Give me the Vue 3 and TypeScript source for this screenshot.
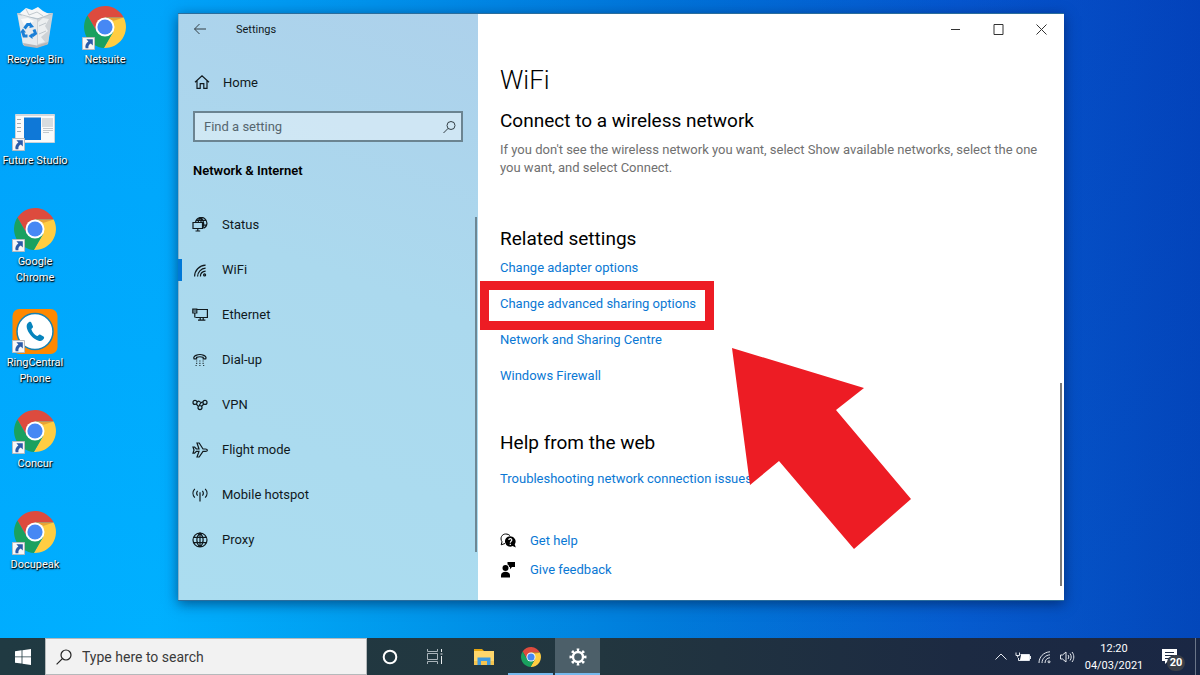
<script setup lang="ts">
interface Shortcut {
  label: string
  kind: 'bin' | 'chrome' | 'studio' | 'phone'
}
interface NavItem {
  label: string
  d: string
  active?: boolean
}

const columns: Shortcut[][] = [
  [
    { label: 'Recycle Bin', kind: 'bin' },
    { label: 'Future Studio', kind: 'studio' },
    { label: 'Google Chrome', kind: 'chrome' },
    { label: 'RingCentral Phone', kind: 'phone' },
    { label: 'Concur', kind: 'chrome' },
    { label: 'Docupeak', kind: 'chrome' },
  ],
  [{ label: 'Netsuite', kind: 'chrome' }],
]

const nav: NavItem[] = [
  {
    label: 'Status',
    d: 'M3.6 5A5.700 5.700 0 1 1 11.500 11.300M9 .6C6.800 2 6.200 3.600 6.200 5M9 .6C11.800 3 12.200 7.500 11 10.500M9 .6V5M4.200 3.300H13.800M11.500 8.200H14.400M1 5.500H10.500V11.500H1ZM5.800 11.500V14M3.500 14H8.200',
  },
  {
    label: 'WiFi',
    d: 'M2.6 14.5C2.6 8.5 7 3.6 13.6 3.2M5.6 14.5C5.6 10 9 6.6 13.6 6.2M8.4 14.5C8.4 11.6 10.4 9.4 13.6 9.1M11.6 12.9a1 1 0 1 0 2 0a1 1 0 1 0 -2 0',
    active: true,
  },
  {
    label: 'Ethernet',
    d: 'M5 2.5H15.4V10.5H3.5M8.2 10.5V13M11.2 10.5V13M6 13.1H13.4M.8 2.2H4.8V6H.8ZM2.8 6V10.5M1.6 4H4',
  },
  {
    label: 'Dial-up',
    d: 'M2 6.8C1.2 5.4 2.4 4.2 4 3.4C6.4 2.3 9.4 2.3 11.8 3.4C13.4 4.2 14.6 5.4 13.8 6.8H11.2V5.4C9.2 4.6 6.6 4.6 4.6 5.4V6.8ZM4.2 9h1M7.4 9h1M10.6 9h1M4.2 11.3h1M7.4 11.3h1M10.6 11.3h1M3.6 13.5h1M7.4 13.5h1M11.2 13.5h1',
  },
  {
    label: 'VPN',
    d: 'M1 5.4a2 2 0 1 0 4 0a2 2 0 1 0 -4 0M11 5.4a2 2 0 1 0 4 0a2 2 0 1 0 -4 0M6 10.6a2 2 0 1 0 4 0a2 2 0 1 0 -4 0M5 5.4C6.6 3.4 8 4.2 8.4 5.6M4.2 7L6.4 9.4M11 5.4C9.6 4.6 7.6 7 7.2 8.8M11.8 7L9.6 9.4',
  },
  {
    label: 'Flight mode',
    d: 'M1 5H2.6L4.4 7H7L5 1H7.2L11 7H13.4C16 7 16 9.4 13.4 9.4H11L7.2 15H5L7 9.4H4.4L2.6 11.2H1L2 8Z',
  },
  {
    label: 'Mobile hotspot',
    d: 'M8 6.4V14.4M7.4 5.8h1.2M5.6 3.8C4.5 5.2 4.5 7.2 5.6 8.6M10.4 3.8C11.5 5.2 11.5 7.2 10.4 8.6M2.8 1.8C.4 4.4 .4 8 2.8 10.6M13.2 1.8C15.6 4.4 15.6 8 13.2 10.6',
  },
  {
    label: 'Proxy',
    d: 'M1 8a7 7 0 1 0 14 0a7 7 0 1 0 -14 0M8 1C3.8 5 3.8 11 8 15M8 1C12.2 5 12.2 11 8 15M8 1V15M2 5.4H14M2 10.6H14',
  },
]
</script>

<template>
  <div class="screen">
    <svg class="defs" aria-hidden="true">
      <symbol id="chrome" viewBox="-21 -21 42 42">
        <path fill="#dd4b3e" d="M-17.6-11.45A21 21 0 0 1 18.7-9.5L0-9.5L0 0L-8.23 4.75Z" />
        <path fill="#ffcd42" d="M18.7-9.5A21 21 0 0 1-1.12 20.95L8.23 4.75L0 0L0-9.5Z" />
        <path fill="#1aa15f" d="M-1.12 20.95A21 21 0 0 1-17.6-11.45L-8.23 4.75L0 0L8.23 4.75Z" />
        <path fill="#a52714" opacity=".25" d="M0-9.5H18.7L8-6Z" />
        <circle r="9.5" fill="#fff" />
        <circle r="7.6" fill="#4688f4" />
      </symbol>
      <symbol id="shortcut" viewBox="0 0 13 13">
        <path fill="#f7f7f7" stroke="#b8bcc0" d="M.5.5h12v12h-12z" />
        <path fill="#2b5ba8" d="M4.4 2.2H10.8V8.4L8.8 6.6C7 7.6 6.2 9 6.4 11.2H3.6C2.8 8.4 4 6 6.4 4.4Z" />
      </symbol>
    </svg>

    <div class="desktop">
      <nav class="icons" aria-label="Desktop">
        <div v-for="(column, c) in columns" :key="c" class="column">
          <button v-for="item in column" :key="item.label" class="shortcut" type="button">
            <span class="art">
              <svg v-if="item.kind === 'chrome'" viewBox="0 0 46 46"><use href="#chrome" x="2" y="0" width="42" height="42" /></svg>
              <svg v-else-if="item.kind === 'bin'" viewBox="0 0 46 46">
                <path fill="#c9d6df" d="M5 7L41 7L36 38L25 41L11 39Z" />
                <path fill="#f5f6f7" d="M8 7L14 2L20 4L26 1L31 5L37 8L30 13L20 11L12 12Z" />
                <path fill="#e6eaed" d="M6 9L25 13L25 41L11 38Z" />
                <path fill="#cdd2d6" d="M25 13L40 8L36 37L25 41Z" />
                <path fill="#eceff0" d="M26 16L31 12L37 13L33 20L36 25L29 31L33 36L26 38Z" />
                <path fill="#fafbfb" d="M9 13L16 12L22 15L18 18L12 19Z" />
                <path fill="none" stroke="#abb4bb" stroke-width=".7" d="M5 7.500L25 13L41 7.500M14 3L17 9L25 6L31 10M27 20L34 17M27 28L34 25" />
                <path fill="#b9b6b6" d="M11 37L25 39.500L36 36L35.500 38.500L25 42L12 40Z" />
                <g fill="none" stroke="#1a7fd6" stroke-width="3">
                  <path d="M12.500 22.500L15.500 18.500H18.500" />
                  <path d="M22 23.500L23.500 27.500L20 30" />
                  <path d="M10.500 25.500L12 30H15.500" />
                </g>
                <path fill="#1a7fd6" d="M18 16L22 21L17.500 22ZM20.500 27L20.500 33L16.500 30ZM8 26.500L11 22.500L14 26.500Z" />
              </svg>
              <svg v-else-if="item.kind === 'studio'" viewBox="0 0 46 46">
                <path fill="#fafafa" stroke="#c9d3da" d="M3.500 7.500H42.500V35.500H3.500Z" />
                <path fill="#d3d8dc" d="M4 7H42V9H4Z" />
                <path fill="#0f78d7" d="M12 10.500H29V33H12Z" />
                <path fill="#d8dcdf" d="M30 11H41V20H30Z" />
                <path stroke="#c3c8cc" d="M31 21.500H41M31 23.500H41M31 25.500H37" />
                <path stroke="#a5abb0" d="M5 12.500H9M5 16.500H9M5 20.500H9M5 24.500H9" />
              </svg>
              <svg v-else viewBox="0 0 46 46">
                <rect x=".5" width="45" height="45" rx="7" fill="#ff8800" />
                <circle cx="23" cy="22.500" r="18" fill="#fff" stroke="#1681b3" stroke-width="1.500" />
                <path fill="#0684bd" d="M15.500 14.500C17 12.600 19 12.200 19.500 14L21 17.500C21.400 19 19 19.500 19.400 20.500C20.600 23.600 22.600 25.800 25 27C26.200 27.600 26.600 25.200 28 25.600L31.500 27.600C33 28.800 31.600 30.600 30 31.600C27.600 33 22 30.500 18.500 26C15 21.500 13.600 17 15.500 14.500Z" />
              </svg>
              <svg v-if="item.kind !== 'bin'" class="overlay"><use href="#shortcut" /></svg>
            </span>
            <span class="caption">{{ item.label }}</span>
          </button>
        </div>
      </nav>

      <section class="window" aria-label="Settings">
        <aside class="sidebar">
          <header class="title">
            <button type="button" aria-label="Back">
              <svg class="i16 thin" viewBox="0 0 16 16"><path d="M14 8H2.500M7.500 3L2.500 8L7.500 13" /></svg>
            </button>
            <span>Settings</span>
          </header>
          <a class="home" href="#">
            <svg class="i16 line" viewBox="0 0 16 16"><path d="M1 8.200L8 1.800L15 8.200M3 6.800V14.400H6.200V9.600H9.800V14.400H13V6.800" /></svg>
            Home
          </a>
          <div class="find">
            <input type="text" placeholder="Find a setting" aria-label="Find a setting" />
            <svg class="i16 thin" viewBox="0 0 16 16"><circle cx="10" cy="6.500" r="4" /><path d="M7.200 9.300L2.500 14" /></svg>
          </div>
          <h2>Network &amp; Internet</h2>
          <nav class="nav" aria-label="Network and Internet">
            <a v-for="item in nav" :key="item.label" href="#" :class="{ active: item.active }">
              <svg class="i16 line" viewBox="0 0 16 16"><path :d="item.d" /></svg>
              {{ item.label }}
            </a>
          </nav>
        </aside>

        <main class="content">
          <div class="controls">
            <button type="button" aria-label="Minimise"><svg viewBox="0 0 11 11"><path d="M1 5.500H10" /></svg></button>
            <button type="button" aria-label="Maximise"><svg viewBox="0 0 11 11"><path d="M1 .500H10V10.500H1Z" /></svg></button>
            <button type="button" aria-label="Close"><svg viewBox="0 0 11 11"><path d="M.5.500L10.500 10.500M10.500.500L.5 10.500" /></svg></button>
          </div>
          <h1>WiFi</h1>
          <h2>Connect to a wireless network</h2>
          <p>If you don't see the wireless network you want, select Show available networks, select the one you want, and select Connect.</p>

          <h2 class="related">Related settings</h2>
          <div class="links">
            <a href="#">Change adapter options</a>
            <a href="#" class="marked">Change advanced sharing options</a>
            <a href="#">Network and Sharing Centre</a>
            <a href="#">Windows Firewall</a>
          </div>

          <h2 class="web">Help from the web</h2>
          <div class="links trouble"><a href="#">Troubleshooting network connection issues</a></div>

          <div class="support">
            <a href="#">
              <svg class="i16" viewBox="0 0 16 16">
                <path fill="none" stroke="#000" d="M5 10.500L1.200 11.800L2 8.800C-.4 5 2 1 5.600 1C7.600 1 9 1.600 10 2.800" />
                <path d="M10.300 3.200A5.200 5.200 0 1 0 12.600 13L15.800 14.500L14.700 11.300A5.200 5.200 0 0 0 10.300 3.200Z" />
                <path fill="none" stroke="#fff" stroke-width="1.200" d="M8.800 7C9 5 12 5.200 11.800 7.200C11.600 8.400 10.300 8.200 10.300 9.700M10.300 10.800V12" />
              </svg>
              Get help
            </a>
            <a href="#">
              <svg class="i16" viewBox="0 0 16 16">
                <circle cx="5.500" cy="6" r="3" />
                <path d="M1 15.500V13.500C1 11 3 9.800 5.500 9.800S10 11 10 13.500V15.500ZM7.500 0H15V5H12L10 7.200V5H9.200C9 3.600 8.400 3 7.500 2.600Z" />
              </svg>
              Give feedback
            </a>
          </div>
          <svg class="arrow" viewBox="0 0 180 202" aria-hidden="true"><path fill="#ed1c24" d="M0 0L132 40L104 62L179 151L122 201L47 113L18 137Z" /></svg>
        </main>
      </section>
    </div>

    <footer class="taskbar">
      <button class="start" type="button" aria-label="Start">
        <svg viewBox="0 0 16 16"><path fill="#fff" d="M0 2.200L6.600 1.300V7.500H0ZM7.400 1.200L16 0V7.500H7.400ZM0 8.300H6.600V14.600L0 13.700ZM7.400 8.300H16V16L7.400 14.700Z" /></svg>
      </button>
      <div class="search">
        <svg viewBox="0 0 16 16"><circle cx="10" cy="6" r="5" /><path d="M6.400 9.600L.6 15.400" /></svg>
        <input type="text" placeholder="Type here to search" aria-label="Type here to search" />
      </div>
      <div class="apps">
        <button type="button" aria-label="Cortana"><svg viewBox="0 0 24 24"><circle cx="12" cy="12" r="6.300" fill="none" stroke="#fff" stroke-width="2" /></svg></button>
        <button type="button" aria-label="Task view">
          <svg viewBox="0 0 24 24" fill="none" stroke="#aab4ba"><path d="M2.500 4V6.500H12.500V4M2.500 19V16.500H12.500V19M2.500 8.500H12.500V14.500H2.500Z" /><path stroke="#e8ecee" d="M16.500 4V7M16.500 11V19M15.500 9H17.500" /></svg>
        </button>
        <button type="button" aria-label="File Explorer">
          <svg viewBox="0 0 24 24"><path fill="#e5a50e" d="M2 4H10L12 6H2Z" /><path fill="#ffd76b" d="M2 6H22V20H2Z" /><path fill="#f4c44e" d="M2 16H22V20H2Z" /><path fill="#3e9ae0" d="M5.500 12.500H18.500V20H15V16H9V20H5.500Z" /></svg>
        </button>
        <button type="button" class="running" aria-label="Google Chrome"><svg viewBox="0 0 24 24"><use href="#chrome" x="2" y="2" width="20" height="20" /></svg></button>
        <button type="button" class="current" aria-label="Settings">
          <svg viewBox="0 0 24 24" fill="none" stroke="#fff"><circle cx="12" cy="12" r="5" stroke-width="2.400" /><circle cx="12" cy="12" r="7" stroke-width="3" pathLength="80" stroke-dasharray="4.400 5.600" stroke-dashoffset="2.200" /></svg>
        </button>
      </div>
      <div class="tray">
        <button type="button" aria-label="Show hidden icons"><svg viewBox="0 0 16 16"><path d="M2.500 10.500L8 5L13.500 10.500" /></svg></button>
        <button type="button" aria-label="Battery"><svg viewBox="0 0 16 16"><path d="M5.500 5.500H14.500V11.500H3.500V9M15.500 7V10M1 3.500V6.500H4.500V3.500M2.700 6.500V8.500" /><path fill="#fff" stroke="none" d="M6 6H14V11H5Z" /></svg></button>
        <button type="button" aria-label="Wireless"><svg viewBox="0 0 16 16"><path d="M2 14C2 8 6.500 3.200 13 2.800M5 14C5 9.500 8.500 6.200 13 5.800M8 14C8 11 10 9 13 8.700M11 12.800a1 1 0 1 0 2 0a1 1 0 1 0 -2 0" /></svg></button>
        <button type="button" aria-label="Volume"><svg viewBox="0 0 16 16"><path d="M1.500 6H3.500L7 3V13L3.500 10H1.500ZM9 6C10 7.200 10 8.800 9 10M11 4.500C12.600 6.500 12.600 9.500 11 11.500M13 3C15.400 6 15.400 10 13 13" /></svg></button>
        <button type="button" class="clock"><span>12:20</span><span>04/03/2021</span></button>
        <button type="button" class="notes" aria-label="20 notifications">
          <svg viewBox="0 0 16 16"><path fill="#fff" stroke="none" d="M0 0H15V12H6L3 15V12H0Z" /><path stroke="#1d2b45" d="M3 3.500H12M3 6.500H12M3 9.500H9" /></svg>
          <span class="badge">20</span>
        </button>
      </div>
    </footer>
  </div>
</template>

<style>
body {
  margin: 0;
}
</style>

<style scoped>
.screen {
  display: flex;
  flex-direction: column;
  min-height: 100vh;
  font-family: "Segoe UI", Roboto, "Noto Sans", sans-serif;
  font-size: 13px;
  color: #10191d;
  background:
    linear-gradient(to bottom, rgba(0, 80, 220, 0.12), rgba(0, 190, 255, 0.06)),
    linear-gradient(to right, #00adff 0%, #00b0ff 13%, #009cee 30%, #0078d8 55%, #0656cc 80%, #0340b6 100%);
}
.screen *,
.screen *::before,
.screen *::after {
  box-sizing: border-box;
}
.defs {
  position: absolute;
  width: 0;
  height: 0;
}
button {
  border: 0;
  padding: 0;
  background: none;
  color: inherit;
  font: inherit;
}
a {
  color: inherit;
  text-decoration: none;
}
h1,
h2,
p {
  margin: 0;
}
.desktop {
  flex: 1;
  display: flex;
}
.icons {
  display: flex;
  flex: 0 0 178px;
  padding-top: 6px;
}
.column {
  width: 70px;
}
.shortcut {
  display: flex;
  flex-direction: column;
  align-items: center;
  width: 70px;
  height: 101px;
}
.art {
  position: relative;
  width: 46px;
  height: 46px;
}
.art svg {
  display: block;
  width: 46px;
  height: 46px;
}
.art .overlay {
  position: absolute;
  left: 0;
  bottom: 2px;
  width: 13px;
  height: 13px;
}
.caption {
  color: #fff;
  font-size: 11px;
  line-height: 16px;
  text-shadow: 1px 1px 1px #000, 0 1px 2px rgba(0, 0, 0, 0.8);
}
.window {
  flex: 1;
  display: grid;
  grid-template-columns: 300px minmax(0, 1fr);
  margin: 13px 136px 37px 0;
  border: 1px solid #2b6d9c;
  border-width: 1px 0;
  background: #fff;
  box-shadow: 0 3px 12px rgba(0, 20, 60, 0.55);
}
.i16 {
  flex: none;
  width: 16px;
  height: 16px;
}
.line {
  fill: none;
  stroke: #10191d;
  stroke-width: 1.2;
}
.thin {
  fill: none;
  stroke: #333f45;
}
.sidebar {
  border-left: 1px solid #86b2ca;
  background: linear-gradient(200deg, #add1eb 0%, #abd9ee 45%, #abddf0 100%);
}
.title {
  display: flex;
  align-items: center;
  height: 30px;
  padding-left: 13px;
  gap: 28px;
  font-size: 11px;
}
.title button,
.title svg {
  display: block;
}
.home {
  display: flex;
  align-items: center;
  gap: 13px;
  height: 36px;
  margin-top: 20px;
  padding-left: 15px;
}
.find {
  display: flex;
  align-items: center;
  height: 31px;
  margin: 11px 15px 0 14px;
  padding: 0 4px 0 9px;
  border: 2px solid #6b8491;
  background: rgba(255, 255, 255, 0.42);
}
.find input,
.search input {
  flex: 1;
  min-width: 0;
  padding: 0;
  border: 0;
  outline: 0;
  background: none;
  font: inherit;
}
.find input::placeholder {
  color: #56666e;
  opacity: 1;
}
.sidebar h2 {
  margin: 17px 0 19px 14px;
  font-size: 13px;
  font-weight: 600;
  line-height: 24px;
  color: #000;
}
.nav {
  position: relative;
}
.nav::after {
  content: "";
  position: absolute;
  top: 15px;
  right: 1px;
  bottom: 10px;
  width: 2px;
  background: #6d8794;
}
.nav a {
  display: flex;
  align-items: center;
  gap: 14px;
  height: 45px;
  padding-left: 13px;
}
.nav .active {
  position: relative;
}
.nav .active::before {
  content: "";
  position: absolute;
  left: -1px;
  width: 4px;
  height: 22px;
  background: #0078d7;
}
.content {
  position: relative;
  padding: 0 14px 19px 22px;
}
.controls {
  display: flex;
  justify-content: flex-end;
  height: 30px;
  margin-right: -13px;
}
.controls button {
  display: grid;
  place-items: center;
  width: 43px;
}
.controls svg {
  width: 11px;
  height: 11px;
  fill: none;
  stroke: #333;
}
h1 {
  margin-top: 18px;
  font-size: 26px;
  font-weight: 300;
  line-height: 36px;
  color: #000;
}
.content h2 {
  margin-top: 10px;
  font-size: 19px;
  font-weight: 400;
  line-height: 26px;
  color: #000;
}
p {
  margin-top: 7px;
  line-height: 18px;
  color: #707070;
}
.content .related {
  margin-top: 49px;
}
.content .web {
  margin-top: 44px;
}
.links {
  display: flex;
  flex-direction: column;
  align-items: flex-start;
  gap: 16px;
  margin-top: 6px;
  line-height: 20px;
  color: #0a78d4;
}
.trouble {
  margin-top: 13px;
}
.marked {
  position: relative;
}
.marked::after {
  content: "";
  position: absolute;
  inset: -13px auto -16px -20px;
  width: 234px;
  border: 9px solid #ed1c24;
}
.support {
  display: grid;
  gap: 9px;
  margin-top: 42px;
  line-height: 20px;
  color: #0a78d4;
}
.support a {
  display: flex;
  align-items: center;
  gap: 14px;
}
.content::after {
  content: "";
  position: absolute;
  right: 2px;
  bottom: 14px;
  width: 2px;
  height: 203px;
  background: #7a7a7a;
}
.arrow {
  position: absolute;
  left: 254px;
  top: 334px;
  width: 180px;
  height: 202px;
}
.support svg {
  fill: #000;
}
.taskbar {
  display: flex;
  height: 37px;
  background: linear-gradient(to right, #203a42 0%, #22363f 50%, #1c2a42 80%, #1a2744 100%);
  color: #fff;
}
.start {
  width: 45px;
}
.start svg {
  width: 16px;
  height: 16px;
}
.start,
.tray button,
.apps button {
  display: grid;
  place-items: center;
}
.search {
  display: flex;
  align-items: center;
  flex: 0 1 322px;
  gap: 10px;
  padding-left: 10px;
  border: 1px solid #b5b9bb;
  background: #f2f2f2;
  font-size: 14px;
}
.search svg {
  width: 16px;
  height: 16px;
  fill: none;
  stroke: #222;
  stroke-width: 1.2;
}
.search input::placeholder {
  color: #3a3a3a;
  opacity: 1;
}
.apps {
  display: flex;
  gap: 2px;
}
.apps button {
  width: 45px;
}
.apps svg {
  width: 24px;
  height: 24px;
}
.running {
  box-shadow: inset 0 -2px #76b9ed;
}
.apps .current {
  background: #4c5f69;
  box-shadow: inset 0 -2px #76b9ed;
}
.tray {
  display: flex;
  margin-left: auto;
  padding-right: 5px;
  border-right: 1px solid #6b7688;
  margin-right: 4px;
}
.tray button {
  width: 22px;
}
.tray svg {
  width: 16px;
  height: 16px;
  fill: none;
  stroke: #e4e8ee;
}
.tray .clock {
  align-content: center;
  width: 72px;
  font-size: 11px;
  line-height: 17px;
}
.tray .notes {
  position: relative;
  width: 40px;
}
.badge {
  position: absolute;
  right: 5px;
  bottom: 4px;
  width: 18px;
  height: 16px;
  border-radius: 8px;
  background: #3a3f48;
  font-size: 11px;
  font-weight: 700;
  line-height: 16px;
}
</style>
